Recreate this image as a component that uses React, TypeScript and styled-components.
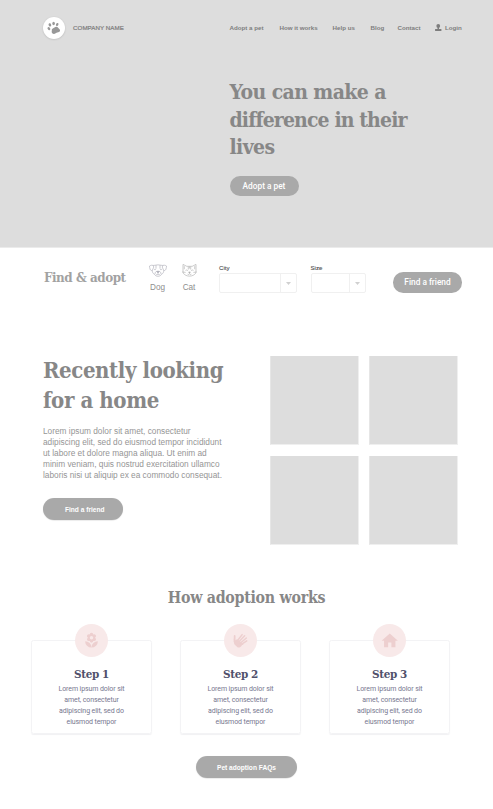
import React from "react";
import styled, { createGlobalStyle } from "styled-components";
import { MdLocalFlorist, MdHome } from "react-icons/md";

const Global = createGlobalStyle`
  * { box-sizing: border-box; }
  body { margin: 0; background: #fff; font-family: "Liberation Sans", Arial, sans-serif; }
  h1, h2, h3, p { margin: 0; }
`;

const Page = styled.div`
  width: 493px;
  height: 809px;
  overflow: hidden;
`;

const Heading = styled.h2<{ $size: number; $line: number; $color?: string; $spacing?: number }>`
  font-family: "DejaVu Serif Condensed", "DejaVu Serif", serif;
  font-stretch: condensed;
  font-weight: bold;
  font-size: ${(p) => p.$size}px;
  line-height: ${(p) => p.$line}px;
  letter-spacing: ${(p) => p.$spacing ?? 0}px;
  color: ${(p) => p.$color ?? "#878787"};
  white-space: nowrap;
`;

const Tight = styled.span`
  letter-spacing: -0.87px;
`;

const Pill = styled.button<{ $w: number; $h: number; $small?: boolean; $shift?: number }>`
  display: flex;
  align-items: center;
  justify-content: center;
  width: ${(p) => p.$w}px;
  height: ${(p) => p.$h}px;
  padding: 0 0 0 ${(p) => p.$shift ?? 0}px;
  border: 0;
  border-radius: ${(p) => p.$h / 2}px;
  background: #a9a9a9;
  color: #fff;
  font-family: ${(p) => (p.$small ? '"Liberation Sans", Arial, sans-serif' : "Roboto, sans-serif")};
  font-weight: ${(p) => (p.$small ? 700 : 500)};
  font-size: ${(p) => (p.$small ? 6.6 : 8.3)}px;
  white-space: nowrap;
  box-shadow: ${(p) => (p.$small ? "0 0.5px 1px rgba(0, 0, 0, 0.14)" : "none")};
`;

/* Header and hero */
const Hero = styled.header`
  height: 248px;
  background: #ddd;
  border-bottom: 1px solid #ebebeb;
`;

const TopBar = styled.div`
  display: flex;
  align-items: center;
  height: 56px;
  padding: 0 31px 0 42.5px;
  color: #7d7d7d;
  font-size: 6.2px;
  line-height: 7px;
  font-weight: bold;
  white-space: nowrap;
`;

const Logo = styled.div`
  display: grid;
  place-items: center;
  width: 22px;
  height: 22px;
  border-radius: 50%;
  background: #fff;
  box-shadow: 0 0.5px 2px rgba(0, 0, 0, 0.16);
`;

const Company = styled.span`
  margin-left: 8.5px;
  padding-bottom: 1px;
  font-weight: normal;
  letter-spacing: 0.05px;
  -webkit-text-stroke: 0.2px #7d7d7d;
`;

const Nav = styled.nav`
  display: grid;
  grid-template-columns: 50px 53px 38px 27px 37.5px auto;
  width: 232.5px;
  margin-left: auto;
  padding-bottom: 1px;
`;

const Login = styled.span`
  display: flex;
  align-items: center;
  gap: 3.5px;
`;

const HeroCopy = styled.div`
  padding: 22px 0 0 229.5px;
`;

const HeroAction = styled.div`
  margin-top: 15px;
`;

/* Search bar */
const Finder = styled.section`
  display: grid;
  grid-template-columns: 104.5px 31.5px 39px 91.5px 82px auto;
  align-items: start;
  height: 107px;
  padding: 15.5px 0 0 44px;
`;

const FinderTitle = styled.div`
  padding-top: 5px;
`;

const Animal = styled.div`
  display: flex;
  flex-direction: column;
  align-items: center;
  width: 18px;
  gap: 6px;
  font-size: 8.2px;
  line-height: 10px;
  color: #8e8e8e;
`;

const Field = styled.div`
  font-size: 6.1px;
  line-height: 7px;
  color: #4c4c4c;
  -webkit-text-stroke: 0.1px #4c4c4c;
`;

const Select = styled.div<{ $w: number }>`
  display: grid;
  grid-template-columns: 1fr 16.5px;
  width: ${(p) => p.$w}px;
  height: 20px;
  margin-top: 2.5px;
  border: 1px solid #f0f0f0;
  border-radius: 2px;
`;

const Arrow = styled.span`
  display: grid;
  place-items: center;
  border-left: 1px solid #f0f0f0;
`;

const FinderAction = styled.div`
  padding: 8.5px 0 0 0.5px;
`;

/* Recently added pets */
const Recent = styled.section`
  display: flex;
  justify-content: space-between;
  height: 232px;
  padding: 0 35px 0 43px;
`;

const Body = styled.p`
  margin-top: 11px;
  font-size: 8.3px;
  line-height: 11px;
  color: #959595;
  white-space: nowrap;
`;

const RecentAction = styled.div`
  margin-top: 17px;
`;

const Gallery = styled.div`
  display: grid;
  grid-template-columns: 89px 89px;
  grid-auto-rows: 89px;
  gap: 11px 10px;
  padding-top: 1px;
`;

const Photo = styled.div`
  background: #ddd;
  border: solid #efefef;
  border-width: 0 1px 1px;
  border-left-color: #e6e6e6;
`;

/* Adoption steps */
const Works = styled.section`
  display: flex;
  flex-direction: column;
  align-items: center;
`;

const Cards = styled.div`
  display: flex;
  gap: 28px;
  align-self: flex-start;
  margin: 14px 0 0 31px;
`;

const Card = styled.article`
  display: flex;
  flex-direction: column;
  align-items: center;
  width: 121px;
  height: 94px;
  margin-top: 17px;
  border: 1px solid #f3f3f5;
  border-radius: 2.5px;
  box-shadow: 0 1px 1px rgba(50, 50, 80, 0.07);
`;

const Badge = styled.div`
  display: grid;
  place-items: center;
  flex: none;
  width: 33.5px;
  height: 33.5px;
  margin-top: -17.5px;
  border-radius: 50%;
  background: #f8e9e9;
  color: #edcfcf;
`;

const StepTitle = styled.div`
  margin-top: 9px;
`;

const StepText = styled.p`
  margin-top: 2px;
  font-family: Roboto, sans-serif;
  font-size: 7px;
  letter-spacing: -0.1px;
  line-height: 11px;
  text-align: center;
  color: #77778f;
  white-space: nowrap;
`;

const WorksAction = styled.div`
  margin-top: 22px;
`;

const PawIcon = () => (
  <svg width="14" height="14" viewBox="0 0 14 14" fill="#989898">
    <ellipse cx="1.9" cy="7.6" rx="1.2" ry="1.6" transform="rotate(-35 1.9 7.6)" />
    <ellipse cx="2.9" cy="3.9" rx="1.3" ry="1.7" transform="rotate(-20 2.9 3.9)" />
    <ellipse cx="6.6" cy="2.5" rx="1.3" ry="1.7" />
    <ellipse cx="10.2" cy="3.5" rx="1.2" ry="1.6" transform="rotate(25 10.2 3.5)" />
    <path d="M4.8 8.2C6.200 7.600 8.500 5.200 10.300 5.900c1 .4 1.200 1.400 2 2.100 1.200 1 .9 2.500-.3 3-1.200.5-2.200.5-3.300 1.300-1.400 1-3.500.8-3.900-.8-.3-1.300.3-2.200 0-3.300z" />
  </svg>
);

const UserIcon = () => (
  <svg width="6.5" height="7" viewBox="0 0 6.5 7" fill="#7d7d7d">
    <circle cx="3.250" cy="1.900" r="1.900" />
    <path d="M2.500 3h1.500v2H6.400V7H.1V5h2.400z" />
  </svg>
);

const DogIcon = () => (
  <svg width="18" height="13" viewBox="0 0 18 13" fill="none" stroke="#a9a9b4" strokeWidth=".6">
    <path d="M4 1.500Q9 .2 14 1.500M4 1.500C3 1 1.800 1.200.5 2c.3 1.200 0 2.200.6 3.300.4 1 1.300 1.500 2.200 1.100L4.800 3zM14 1.500c1-.5 2.200-.3 3.500.5-.3 1.200 0 2.200-.6 3.300-.4 1-1.300 1.500-2.200 1.100L13.200 3zM3.300 6.400c0 2 .7 3.200 2 3.700.8 1.500 2.200 2.200 3.700 2.200s2.900-.7 3.700-2.200c1.300-.5 2-1.700 2-3.700M6 10c0-2 1.200-2.800 3-2.800s3 .8 3 2.800M9 9v1.200M7.200 10.600c.8.3 1.500 0 1.800-.4.300.4 1 .7 1.800.4M7 1.200v3.500M11 1.200v3.500" />
    <path d="M7.800 7.600h2.400L9 9z" fill="#a9a9b4" />
    <circle cx="6" cy="5.500" r=".4" />
    <circle cx="12" cy="5.500" r=".4" />
  </svg>
);

const CatIcon = () => (
  <svg width="15" height="13" viewBox="0 0 15 13" fill="none" stroke="#a9a9a9" strokeWidth=".6">
    <path d="M1 .4 4.800 2.300h5.400L14 .4v7.600c0 1.300-1.200 2.500-2.800 3.300-2 1.100-5.400 1.100-7.400 0C2.200 10.500 1 9.300 1 8zM2.300 2.200v3M12.700 2.200v3M6.300 2.500v3M8.700 2.500v3M7.500 2.500v2M3.500 6.400q1.200-.9 2.400.2M11.500 6.400q-1.200-.9-2.400.2M7.500 9v.9M5.600 10.200c.9.5 1.600.2 1.900-.3.300.5 1 .8 1.900.3M.3 8l3.300.4M14.700 8l-3.300.4" />
    <path d="M6.600 8h1.800l-.9 1z" fill="#a9a9a9" />
  </svg>
);

const HandIcon = () => (
  <svg width="15" height="15" viewBox="-.3 -.3 14.6 14.6" stroke="#edcfcf" strokeLinecap="round" fill="none">
    <path d="M1.300 2.500V8" strokeWidth="1.700" />
    <path d="M4 7.200 8.600 1.300M6 7.800 11 2.400M7.500 9 12.700 4.600M8.300 10.600 13.100 7.300" strokeWidth="1.450" />
    <path d="M.45 5 2.200 6.800 3.600 6.600 9 10.700C8.300 12.200 7.500 13.100 6.500 13.600c-1 .5-2 .3-2.700-.3L1.200 10.800C.5 10 .45 7.500.45 5z" fill="#edcfcf" stroke="none" />
    <path d="M3.600 6.600 9 10.700" strokeWidth="1.500" />
  </svg>
);

const Caret = () => (
  <svg width="5" height="3" viewBox="0 0 5 3">
    <path d="M0 0h5L2.500 3z" fill="#d0d0d0" />
  </svg>
);

const steps = [
  { title: "Step 1", icon: <MdLocalFlorist size={17} /> },
  { title: "Step 2", icon: <HandIcon /> },
  { title: "Step 3", icon: <MdHome size={19.5} /> },
];

export default function App() {
  return (
    <Page>
      <Global />
      <Hero>
        <TopBar>
          <Logo><PawIcon /></Logo>
          <Company>COMPANY NAME</Company>
          <Nav>
            <span>Adopt a pet</span>
            <span>How it works</span>
            <span>Help us</span>
            <span>Blog</span>
            <span>Contact</span>
            <Login><UserIcon />Login</Login>
          </Nav>
        </TopBar>
        <HeroCopy>
          <Heading as="h1" $size={21} $line={27.5} $spacing={-0.6}>
            You can make a<br /><Tight>difference in their</Tight><br />lives
          </Heading>
          <HeroAction><Pill $w={69} $h={20.5}>Adopt a pet</Pill></HeroAction>
        </HeroCopy>
      </Hero>

      <Finder>
        <FinderTitle>
          <Heading $size={13.3} $line={18} $spacing={-0.46} $color="#a2a2a2">Find &amp; adopt</Heading>
        </FinderTitle>
        <Animal><DogIcon />Dog</Animal>
        <Animal><CatIcon />Cat</Animal>
        <Field>City<Select $w={78}><span /><Arrow><Caret /></Arrow></Select></Field>
        <Field>Size<Select $w={55.5}><span /><Arrow><Caret /></Arrow></Select></Field>
        <FinderAction><Pill $w={69} $h={20.5}>Find a friend</Pill></FinderAction>
      </Finder>

      <Recent>
        <div>
          <Heading $size={22} $line={30} $spacing={-0.4}>Recently looking<br />for a home</Heading>
          <Body>
            Lorem ipsum dolor sit amet, consectetur<br />
            adipiscing elit, sed do eiusmod tempor incididunt<br />
            ut labore et dolore magna aliqua. Ut enim ad<br />
            minim veniam, quis nostrud exercitation ullamco<br />
            laboris nisi ut aliquip ex ea commodo consequat.
          </Body>
          <RecentAction><Pill $w={79.5} $h={22} $small $shift={4}>Find a friend</Pill></RecentAction>
        </div>
        <Gallery><Photo /><Photo /><Photo /><Photo /></Gallery>
      </Recent>

      <Works>
        <Heading $size={15.8} $line={22} $spacing={-0.28}>How adoption works</Heading>
        <Cards>
          {steps.map((s) => (
            <Card key={s.title}>
              <Badge>{s.icon}</Badge>
              <StepTitle>
                <Heading as="h3" $size={11.6} $line={16} $spacing={-0.4} $color="#50506b">{s.title}</Heading>
              </StepTitle>
              <StepText>
                Lorem ipsum dolor sit<br />amet, consectetur<br />adipiscing elit, sed do<br />eiusmod tempor
              </StepText>
            </Card>
          ))}
        </Cards>
        <WorksAction><Pill $w={101} $h={22} $small>Pet adoption FAQs</Pill></WorksAction>
      </Works>
    </Page>
  );
}
